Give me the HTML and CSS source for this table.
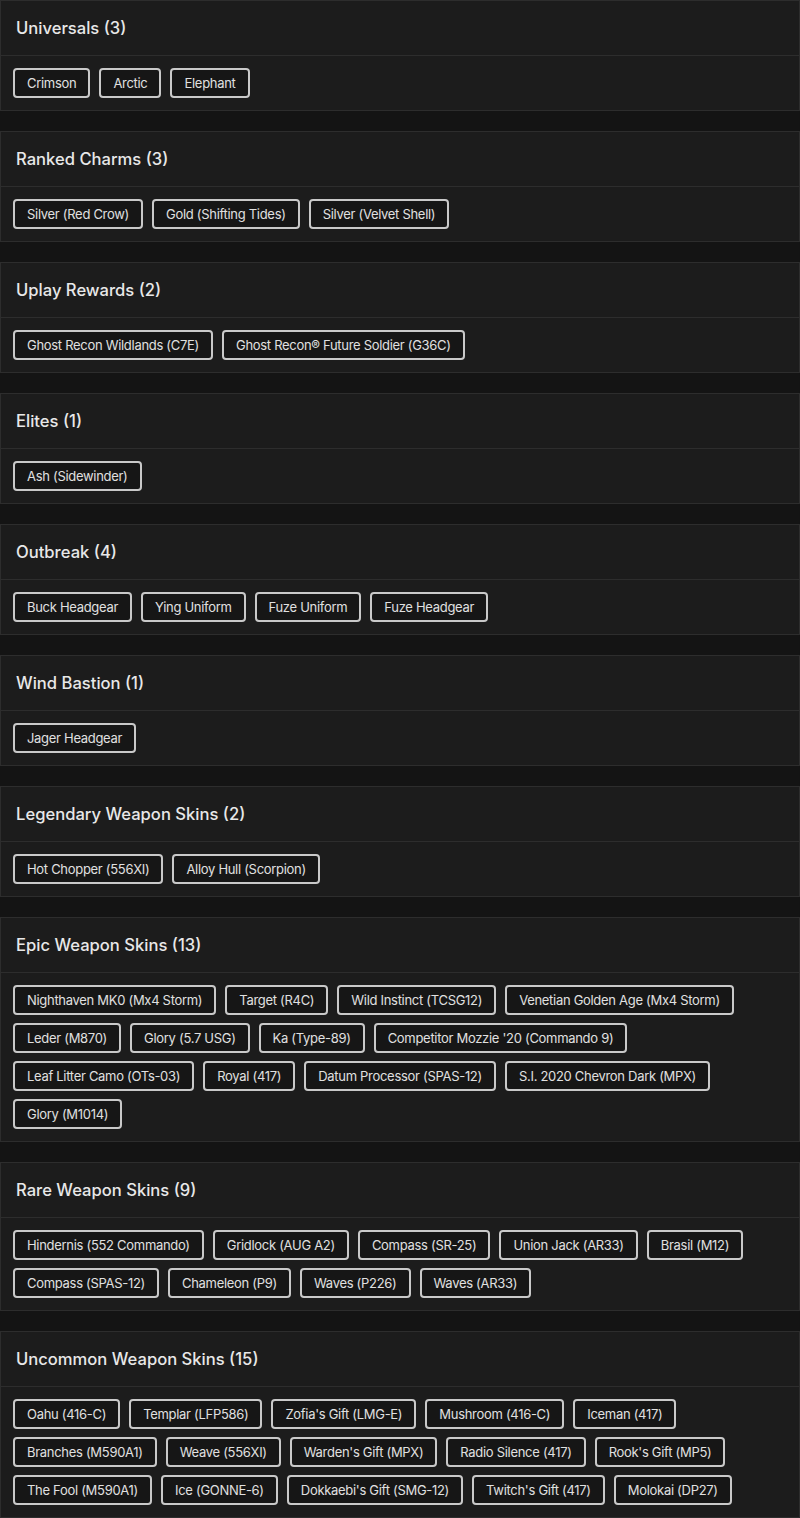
FILE: index.html
```html
<!DOCTYPE html>
<html lang="en">
<head>
<meta charset="utf-8">
<title>Collection</title>
<link rel="stylesheet" href="styles.css">
</head>
<body>
<main class="list">
  <section class="card">
    <h2 class="card-title">Universals (3)</h2>
    <div class="chips">
      <span class="chip">Crimson</span><span class="chip">Arctic</span><span class="chip">Elephant</span>
    </div>
  </section>
  <section class="card">
    <h2 class="card-title">Ranked Charms (3)</h2>
    <div class="chips">
      <span class="chip">Silver (Red Crow)</span><span class="chip">Gold (Shifting Tides)</span><span class="chip">Silver (Velvet Shell)</span>
    </div>
  </section>
  <section class="card">
    <h2 class="card-title">Uplay Rewards (2)</h2>
    <div class="chips">
      <span class="chip">Ghost Recon Wildlands (C7E)</span><span class="chip">Ghost Recon® Future Soldier (G36C)</span>
    </div>
  </section>
  <section class="card">
    <h2 class="card-title">Elites (1)</h2>
    <div class="chips">
      <span class="chip">Ash (Sidewinder)</span>
    </div>
  </section>
  <section class="card">
    <h2 class="card-title">Outbreak (4)</h2>
    <div class="chips">
      <span class="chip">Buck Headgear</span><span class="chip">Ying Uniform</span><span class="chip">Fuze Uniform</span><span class="chip">Fuze Headgear</span>
    </div>
  </section>
  <section class="card">
    <h2 class="card-title">Wind Bastion (1)</h2>
    <div class="chips">
      <span class="chip">Jager Headgear</span>
    </div>
  </section>
  <section class="card">
    <h2 class="card-title">Legendary Weapon Skins (2)</h2>
    <div class="chips">
      <span class="chip">Hot Chopper (556XI)</span><span class="chip">Alloy Hull (Scorpion)</span>
    </div>
  </section>
  <section class="card">
    <h2 class="card-title">Epic Weapon Skins (13)</h2>
    <div class="chips">
      <span class="chip">Nighthaven MK0 (Mx4 Storm)</span><span class="chip">Target (R4C)</span><span class="chip">Wild Instinct (TCSG12)</span><span class="chip">Venetian Golden Age (Mx4 Storm)</span><span class="chip">Leder (M870)</span><span class="chip">Glory (5.7 USG)</span><span class="chip">Ka (Type-89)</span><span class="chip">Competitor Mozzie '20 (Commando 9)</span><span class="chip">Leaf Litter Camo (OTs-03)</span><span class="chip">Royal (417)</span><span class="chip">Datum Processor (SPAS-12)</span><span class="chip">S.I. 2020 Chevron Dark (MPX)</span><span class="chip">Glory (M1014)</span>
    </div>
  </section>
  <section class="card">
    <h2 class="card-title">Rare Weapon Skins (9)</h2>
    <div class="chips">
      <span class="chip">Hindernis (552 Commando)</span><span class="chip">Gridlock (AUG A2)</span><span class="chip">Compass (SR-25)</span><span class="chip">Union Jack (AR33)</span><span class="chip">Brasil (M12)</span><span class="chip">Compass (SPAS-12)</span><span class="chip">Chameleon (P9)</span><span class="chip">Waves (P226)</span><span class="chip">Waves (AR33)</span>
    </div>
  </section>
  <section class="card">
    <h2 class="card-title">Uncommon Weapon Skins (15)</h2>
    <div class="chips">
      <span class="chip">Oahu (416-C)</span><span class="chip">Templar (LFP586)</span><span class="chip">Zofia's Gift (LMG-E)</span><span class="chip">Mushroom (416-C)</span><span class="chip">Iceman (417)</span><span class="chip">Branches (M590A1)</span><span class="chip">Weave (556XI)</span><span class="chip">Warden's Gift (MPX)</span><span class="chip">Radio Silence (417)</span><span class="chip">Rook's Gift (MP5)</span><span class="chip">The Fool (M590A1)</span><span class="chip">Ice (GONNE-6)</span><span class="chip">Dokkaebi's Gift (SMG-12)</span><span class="chip">Twitch's Gift (417)</span><span class="chip">Molokai (DP27)</span>
    </div>
  </section>
</main>
</body>
</html>
```

FILE: styles.css
```css
html, body {
  margin: 0;
  padding: 0;
  background: #141414;
}

body {
  font-family: Inter, "Noto Sans", "DejaVu Sans", sans-serif;
  color: #e6e6e6;
}

.list {
  display: flex;
  flex-direction: column;
  gap: 20px;
  width: 800px;
}

.card {
  background: #1c1c1c;
  border: 1px solid #2d2d2d;
}

.card-title {
  margin: 0;
  height: 54px;
  display: flex;
  align-items: center;
  padding: 0 15px;
  font-size: 16.6px;
  font-weight: 500;
  color: #e8e8e8;
  border-bottom: 1px solid #2d2d2d;
}

.chips {
  display: flex;
  flex-wrap: wrap;
  column-gap: 9px;
  row-gap: 8px;
  padding: 12px;
}

.chip {
  box-sizing: border-box;
  height: 30px;
  display: inline-flex;
  align-items: center;
  padding: 0 12px;
  border: 2px solid #c9c9c9;
  border-radius: 4px;
  background: #161616;
  font-size: 13px;
  letter-spacing: -0.3px;
  color: #e0e0e0;
  white-space: nowrap;
}
```
